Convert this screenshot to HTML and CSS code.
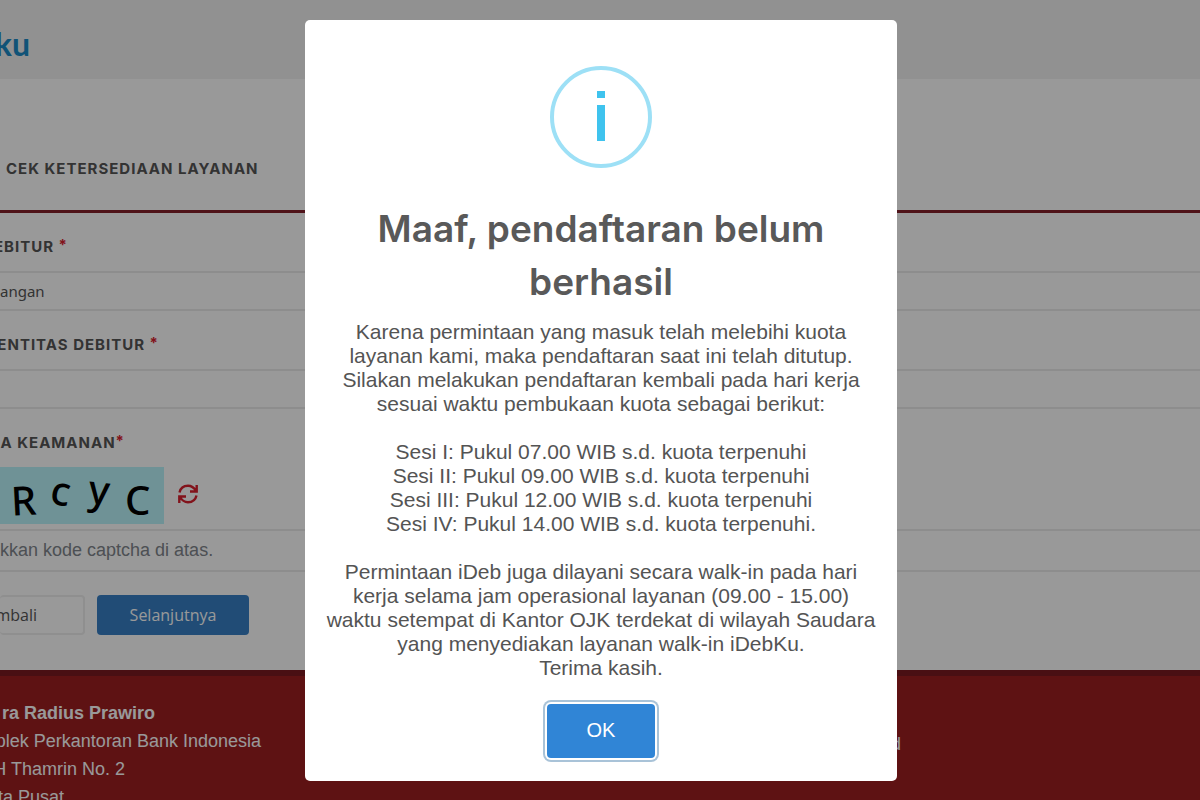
FILE: index.html
```
<!DOCTYPE html>
<html lang="id">

<head>
    <meta charset="UTF-8" />
    <meta name="viewport" content="width=device-width, initial-scale=1" />
    <title>iDebku - Pendaftaran</title>
    <link rel="stylesheet" href="styles.css">
</head>

<body>
    <header class="site-header">
        <a href="#" class="logo clip">ku</a>
    </header>

    <main>
        <h1 class="step-title">CEK KETERSEDIAAN LAYANAN</h1>

        <form class="debitur-form">
            <label class="field-label clip label-jenis" for="jenis">DEBITUR <sup>*</sup></label>
            <select id="jenis" class="field">
                <option>angan</option>
            </select>

            <label class="field-label clip label-identitas" for="identitas">IDENTITAS DEBITUR <sup>*</sup></label>
            <input type="text" id="identitas" class="field" />

            <label class="field-label clip label-captcha" for="captcha">NA KEAMANAN<sup>*</sup></label>
            <div class="captcha-row">
                <svg class="captcha" viewBox="0 0 164 57" role="img" aria-label="Captcha">
                    <text x="11" y="48" font-size="40" transform="rotate(-3 24 36)">R</text>
                    <text x="50" y="38" font-size="40" transform="rotate(10 60 30)">c</text>
                    <text x="88" y="37" font-size="40" transform="rotate(6 98 30)">y</text>
                    <text x="125" y="48" font-size="40">C</text>
                </svg>
                <button type="button" class="refresh" aria-label="Muat ulang captcha">
                    <svg viewBox="0 0 20 20">
                        <path d="M1.5 8.5C2.5 4 6 1.8 10 1.8C13.500 1.800 16 3.500 18 7M18.700 1V7.500H12M18.500 11.500C17.500 16 14 18.200 10 18.200C6.500 18.200 4 16.500 2 13M1.300 19V12.500H8" />
                    </svg>
                </button>
            </div>
            <input type="text" id="captcha" class="field field-captcha" placeholder="kkan kode captcha di atas." />

            <div class="form-actions">
                <button type="button" class="btn btn-back clip">mbali</button>
                <button type="submit" class="btn btn-next">Selanjutnya</button>
            </div>
        </form>
    </main>

    <footer class="site-footer">
        <address>
            <span class="clip addr-name"><b>ra Radius Prawiro</b></span>
            <span class="clip addr-area">plek Perkantoran Bank Indonesia</span>
            <span class="clip addr-street">H Thamrin No. 2</span>
            <span class="clip addr-city">ta Pusat</span>
        </address>
        <span class="footer-link">d</span>
    </footer>

    <div class="overlay">
        <div class="dialog" role="dialog" aria-modal="true" aria-labelledby="dialog-title">
            <div class="dialog-icon">
                <svg viewBox="0 0 102 102">
                    <circle cx="51" cy="51" r="49" />
                    <path d="M47 25H55V32H47ZM47 39H55V75H47Z" />
                </svg>
            </div>
            <h2 id="dialog-title">Maaf, pendaftaran belum berhasil</h2>
            <div class="dialog-text">
                <p>Karena permintaan yang masuk telah melebihi kuota<br>
                    layanan kami, maka pendaftaran saat ini telah ditutup.<br>
                    Silakan melakukan pendaftaran kembali pada hari kerja<br>
                    sesuai waktu pembukaan kuota sebagai berikut:</p>
                <p>Sesi I: Pukul 07.00 WIB s.d. kuota terpenuhi<br>
                    Sesi II: Pukul 09.00 WIB s.d. kuota terpenuhi<br>
                    Sesi III: Pukul 12.00 WIB s.d. kuota terpenuhi<br>
                    Sesi IV: Pukul 14.00 WIB s.d. kuota terpenuhi.</p>
                <p>Permintaan iDeb juga dilayani secara walk-in pada hari<br>
                    kerja selama jam operasional layanan (09.00 - 15.00)<br>
                    waktu setempat di Kantor OJK terdekat di wilayah Saudara<br>
                    yang menyediakan layanan walk-in iDebKu.<br>
                    Terima kasih.</p>
            </div>
            <button type="button" class="ok-btn">OK</button>
        </div>
    </div>
</body>

</html>
```
FILE: styles.css
```
* {
    box-sizing: border-box;
}

body {
    margin: 0;
    height: 100vh;
    overflow: hidden;
    background: #fff;
    color: #555;
    font-family: "Liberation Sans", Arial, sans-serif;
    font-size: 18px;
}

/* text that runs out past the left edge of the page */
.clip {
    display: flex;
    justify-content: flex-end;
    white-space: nowrap;
}

.site-header {
    height: 79px;
    padding-top: 24px;
    background: #f2f2f2;
}

.logo {
    width: 30px;
    color: #1b8ac6;
    font-family: Lato, sans-serif;
    font-size: 32px;
    font-weight: 700;
    line-height: 40px;
    text-decoration: none;
}

.step-title {
    margin: 0;
    padding: 78px 6px 29px;
    border-bottom: 3px solid #84202a;
    font-family: Inter, sans-serif;
    font-size: 15px;
    font-weight: 700;
    letter-spacing: 1px;
    line-height: 24px;
}

.field-label {
    height: 58px;
    padding-top: 22px;
    color: #555;
    font-family: Inter, sans-serif;
    font-size: 15px;
    font-weight: 700;
    letter-spacing: 1px;
    line-height: 24px;
    white-space: pre;
}

.field-label sup {
    color: #d9202e;
    font-size: 15px;
    line-height: 20px;
}

.label-jenis {
    width: 68px;
}

.label-identitas {
    width: 159px;
}

.label-captcha {
    width: 125px;
}

.field {
    display: block;
    width: 100%;
    height: 40px;
    margin: 0;
    padding: 0;
    border: solid #ebebeb;
    border-width: 2px 0;
    border-radius: 0;
    background: #fff;
    color: #555;
    font-family: "Noto Sans", sans-serif;
    font-size: 15px;
    appearance: none;
}

.captcha-row {
    display: flex;
    align-items: center;
    gap: 14px;
    margin-bottom: 5px;
}

.captcha {
    width: 164px;
    height: 57px;
    background: #b9f3fb;
    fill: #000;
    font-family: "Noto Sans", sans-serif;
    font-weight: 500;
}

.refresh {
    padding: 0 0 4px;
    border: 0;
    background: none;
}

.refresh svg {
    display: block;
    width: 20px;
    height: 20px;
    fill: none;
    stroke: #d9202e;
    stroke-width: 2.4;
}

.field-captcha {
    height: 43px;
    font-family: "Liberation Sans", Arial, sans-serif;
    font-size: 18px;
}

.field-captcha::placeholder {
    color: #80858c;
}

.form-actions {
    display: flex;
    gap: 12px;
    padding: 23px 0 35px;
}

.btn {
    height: 40px;
    border-radius: 4px;
    font-family: "Open Sans", sans-serif;
    font-size: 16px;
}

.btn-back {
    align-items: center;
    width: 85px;
    padding: 0 46px 0 0;
    border: 2px solid #eee;
    border-left: 0;
    background: #fff;
    color: #555;
}

.btn-next {
    width: 152px;
    border: 0;
    background: #377fc5;
    color: #fff;
}

.site-footer {
    display: grid;
    grid-template-columns: 74% 1fr;
    padding-top: 23px;
    border-top: 6px solid #7b1a20;
    background: #9d1e21;
    color: #fff;
    line-height: 28px;
}

.site-footer address {
    font-style: normal;
}

.addr-name {
    width: 155px;
}

.addr-area {
    width: 261px;
}

.addr-street {
    width: 125px;
}

.addr-city {
    width: 64px;
}

.footer-link {
    padding: 31px 3px;
}

.overlay {
    position: fixed;
    inset: 0;
    display: flex;
    align-items: center;
    justify-content: center;
    padding-left: 2px;
    background: rgba(0, 0, 0, 0.4);
}

.dialog {
    width: 592px;
    max-width: 100%;
    padding: 46px 20px 23px;
    border-radius: 5px;
    background: #fff;
    text-align: center;
}

.dialog-icon svg {
    display: block;
    width: 102px;
    height: 102px;
    margin: 0 auto 34px;
}

.dialog-icon circle {
    fill: none;
    stroke: #9de0f6;
    stroke-width: 4;
}

.dialog-icon path {
    fill: #3fc3ee;
}

.dialog h2 {
    margin: 0 0 12px;
    color: #595959;
    font-family: Inter, sans-serif;
    font-size: 37px;
    font-weight: 600;
    line-height: 53px;
}

.dialog-text {
    color: #545454;
    font-size: 21px;
    line-height: 24px;
}

.dialog-text p {
    margin: 0 0 24px;
}

.ok-btn {
    width: 108px;
    height: 54px;
    border: 0;
    border-radius: 4px;
    background: #3085d6;
    box-shadow: 0 0 0 2px #fff, 0 0 0 4px #a9c3d8;
    color: #fff;
    font-family: "Liberation Sans", Arial, sans-serif;
    font-size: 20px;
}
```
